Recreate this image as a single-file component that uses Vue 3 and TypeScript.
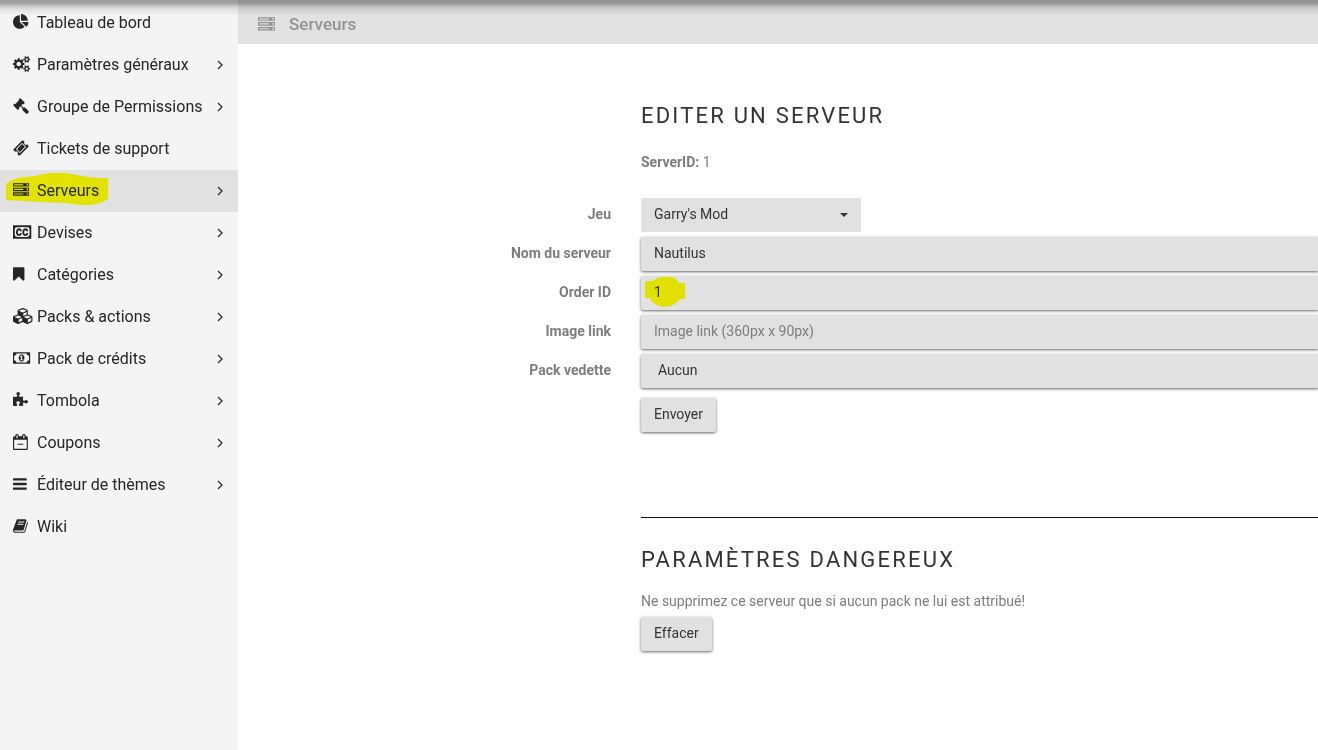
<script setup lang="ts">
import { ref } from 'vue'

interface NavItem {
  label: string
  icon: string
  expandable: boolean
  active?: boolean
}

const icons: Record<string, string> = {
  chart:
    'M768 890l546 546q-106 108-247.500 168T768 1664q-209 0-385.500-103T103 1281.500T0 896t103-385.500T382.500 231T768 128v762zM955 896h773q0 157-60 298.500T1500 1441zM1664 768H896V0q209 0 385.500 103T1561 382.500T1664 768z',
  gears:
    'M896 896q0-106-75-181t-181-75-181 75-75 181 75 181 181 75 181-75 75-181zm768 512q0-52-38-90t-90-38-90 38-38 90q0 53 37.500 90.500t90.500 37.500 90.500-37.500 37.500-90.500zm0-1024q0-52-38-90t-90-38-90 38-38 90q0 53 37.500 90.500t90.500 37.500 90.500-37.500 37.500-90.500zm-384 421v185q0 10-7 19.500t-16 10.500l-155 24q-11 35-32 76 34 48 90 115 7 11 7 20 0 12-7 19-23 30-82.500 89.500t-78.500 59.500q-11 0-21-7l-115-90q-37 19-77 31-11 108-23 155-7 24-30 24h-186q-11 0-20-7.500t-10-17.500l-23-153q-34-10-75-31l-118 89q-7 7-20 7-11 0-21-8-144-133-144-160 0-9 7-19 10-14 41-53t47-61q-23-44-35-82l-152-24q-10-1-17-9.500t-7-19.500v-185q0-10 7-19.500t16-10.500l155-24q11-35 32-76-34-48-90-115-7-11-7-20 0-12 7-20 22-30 82-89t79-59q11 0 21 7l115 90q34-18 77-32 11-108 23-154 7-24 30-24h186q11 0 20 7.500t10 17.500l23 153q34 10 75 31l118-89q8-7 20-7 11 0 21 8 144 133 144 160 0 8-7 19-12 16-42 54t-45 60q23 48 34 82l152 23q10 2 17 10.500t7 19.500zm640 533v140q0 16-149 31-12 27-30 52 51 113 51 138 0 4-4 7-122 71-124 71-8 0-46-47t-52-68q-20 2-30 2t-30-2q-14 21-52 68t-46 47q-2 0-124-71-4-3-4-7 0-25 51-138-18-25-30-52-149-15-149-31v-140q0-16 149-31 13-29 30-52-51-113-51-138 0-4 4-7 4-2 35-20t59-34 30-16q8 0 46 46.500t52 67.500q20-2 30-2t30 2q51-71 92-112l6-2q4 0 124 70 4 3 4 7 0 25-51 138 17 23 30 52 149 15 149 31zm0-1024v140q0 16-149 31-12 27-30 52 51 113 51 138 0 4-4 7-122 71-124 71-8 0-46-47t-52-68q-20 2-30 2t-30-2q-14 21-52 68t-46 47q-2 0-124-71-4-3-4-7 0-25 51-138-18-25-30-52-149-15-149-31v-140q0-16 149-31 13-29 30-52-51-113-51-138 0-4 4-7 4-2 35-20t59-34 30-16q8 0 46 46.500t52 67.500q20-2 30-2t30 2q51-71 92-112l6-2q4 0 124 70 4 3 4 7 0 25-51 138 17 23 30 52 149 15 149 31z',
  gavel:
    'M1771 1536q0 53-37 90l-107 108q-39 37-91 37-53 0-90-37l-363-364q-38-36-38-90 0-53 43-96l-256-256-126 126q-14 14-34 14t-34-14q2 2 12.500 12t12.500 13 10 11.500 10 13.500 6 13.500 5.500 16.500 1.500 18q0 38-28 68-3 3-16.500 18t-19 20.500-18.500 16.500-22 15.500-22 9-26 4.500q-40 0-68-28l-408-408q-28-28-28-68 0-13 4.500-26t9-22 15.500-22 16.500-18.500 20.500-19 18-16.500q30-28 68-28 10 0 18 1.500t16.500 5.500 13.500 6 13.500 10 11.500 10 13 12.500 12 12.500q-14-14-14-34t14-34l348-348q14-14 34-14t34 14q-2-2-12.500-12t-12.500-13-10-11.500-10-13.500-6-13.500-5.500-16.500-1.500-18q0-38 28-68 3-3 16.500-18t19-20.500 18.500-16.500 22-15.500 22-9 26-4.500q40 0 68 28l408 408q28 28 28 68 0 13-4.500 26t-9 22-15.500 22-16.500 18.500-20.500 19-18 16.500q-30 28-68 28-10 0-18-1.500t-16.500-5.500-13.500-6-13.500-10-11.500-10-13-12.500-12-12.500q14 14 14 34t-14 34l-126 126 256 256q43-43 96-43 52 0 91 37l363 363q37 39 37 91z',
  ticket:
    'M1024 452l316 316-572 572-316-316zm-211 979l618-618q19-19 19-45t-19-45l-362-362q-18-18-45-18t-45 18l-618 618q-19 19-19 45t19 45l362 362q18 18 45 18t45-18zm889-637l-907 908q-37 37-90.500 37t-90.500-37l-126-126q56-56 56-136t-56-136-136-56-136 56l-125-126q-37-37-37-90.500t37-90.500l907-906q37-37 90.500-37t90.500 37l125 125q-56 56-56 136t56 136 136 56 136-56l126 125q37 37 37 90.500t-37 90.500z',
  server:
    'M128 1408h1024v-128h-1024v128zm0-512h1024v-128h-1024v128zm1568 448q0-40-28-68t-68-28-68 28-28 68 28 68 68 28 68-28 28-68zm-1568-960h1024v-128h-1024v128zm1568 448q0-40-28-68t-68-28-68 28-28 68 28 68 68 28 68-28 28-68zm0-512q0-40-28-68t-68-28-68 28-28 68 28 68 68 28 68-28 28-68zm96 832v384h-1792v-384h1792zm0-512v384h-1792v-384h1792zm0-512v384h-1792v-384h1792z',
  captions:
    'M785 1008h207q-14 158-98.500 248.500t-214.500 90.500q-162 0-254.500-116t-92.500-316q0-194 93-311.500t233-117.500q148 0 232 87t97 247h-203q-5-64-35.500-99t-81.500-35q-57 0-88.500 60.500t-31.500 177.500q0 48 5 84t18 69.500 40 51.500 66 18q95 0 109-139zm712 0h206q-14 158-98 248.500t-214 90.500q-162 0-254.500-116t-92.500-316q0-194 93-311.500t233-117.500q148 0 232 87t97 247h-204q-4-64-35-99t-81-35q-57 0-88.500 60.500t-31.500 177.500q0 48 5 84t18 69.500 39.500 51.500 65.500 18q49 0 76.500-38t33.500-101zm359-115q0-207-15.500-307t-60.500-161q-6-8-13.500-14t-21.500-15-16-11q-86-63-697-63-625 0-710 63-5 4-17.500 11.500t-21 14-14.500 14.500q-45 60-60 159.500t-15 308.500q0 208 15 307.500t60 160.500q6 8 15 15t20.500 14 17.500 12q44 33 239.500 49t470.500 16q610 0 697-65 5-4 17-11t20.500-14 13.500-16q46-60 61-159t15-309zm192-765v1536h-2048v-1536h2048z',
  bookmark:
    'M1164 128q23 0 44 9 33 13 52.500 41t19.500 62v1289q0 34-19.500 62t-52.500 41q-19 8-44 8-48 0-83-32l-441-424-441 424q-36 33-83 33-23 0-44-9-33-13-52.500-41t-19.500-62v-1289q0-34 19.500-62t52.500-41q21-9 44-9h1048z',
  cubes:
    'M640 1632l384-192v-314l-384 164v342zm-64-454l404-173-404-173-404 173zm1088 454l384-192v-314l-384 164v342zm-64-454l404-173-404-173-404 173zm-448-293l384-165v-266l-384 164v267zm-64-379l441-189-441-189-441 189zm1088 518v416q0 36-19 67t-52 47l-448 224q-25 14-57 14t-57-14l-448-224q-4-2-7-4-2 2-7 4l-448 224q-25 14-57 14t-57-14l-448-224q-33-16-52-47t-19-67v-416q0-38 21.500-70t56.500-48l434-186v-400q0-38 21.500-70t56.500-48l448-192q23-10 50-10t50 10l448 192q35 16 56.500 48t21.500 70v400l434 186q36 16 57 48t21 70z',
  money:
    'M768 1152h384v-96h-128v-448h-114l-148 137 77 80q42-37 55-57h2v288h-128v96zm512-256q0 70-21 142t-59.500 134-101.500 101-138 39-138-39-101.500-101-59.500-134-21-142 21-142 59.500-134 101.500-101 138-39 138 39 101.500 101 59.500 134 21 142zm512 256v-512q-106 0-181-75t-75-181h-1152q0 106-75 181t-181 75v512q106 0 181 75t75 181h1152q0-106 75-181t181-75zm128-832v1152q0 26-19 45t-45 19h-1792q-26 0-45-19t-19-45v-1152q0-26 19-45t45-19h1792q26 0 45 19t19 45z',
  puzzle:
    'M1664 1098q0 81-44.500 135t-123.500 54q-41 0-77.500-17.500t-59-38-56.500-38-71-17.500q-110 0-110 124 0 39 16 115t15 115v5q-22 0-33 1-34 3-97.500 11.500t-115.500 13.500-98 5q-61 0-103-26.500t-42-83.500q0-37 17.500-71t38-56.500 38-59 17.500-77.500q0-79-54-123.500t-135-44.500q-84 0-143 45.500t-59 127.500q0 43 15 83t33.500 64.500 33.500 53 15 50.500q0 45-46 89-37 35-117 35-95 0-245-24-9-2-27.500-4t-27.500-4l-13-2q-1 0-3-1-2 0-2-1v-1024q2 1 17.500 3.500t34 5 21.500 3.500q150 24 245 24 80 0 117-35 46-44 46-89 0-22-15-50.500t-33.500-53-33.500-64.500-15-83q0-82 59-127.500t144-45.500q80 0 134 44.500t54 123.500q0 41-17.500 77.500t-38 59-38 56.500-17.500 71q0 57 42 83.500t103 26.500q64 0 180-15t163-17v2q-1 2-3.500 17.500t-5 34-3.500 21.500q-24 150-24 245 0 80 35 117 44 46 89 46 22 0 50.500-15t53-33.500 64.500-33.500 83-15q82 0 127.500 59t45.500 143z',
  calendar:
    'M128 1664h1408v-1024h-1408v1024zm384-1216v-288q0-14-9-23t-23-9h-64q-14 0-23 9t-9 23v288q0 14 9 23t23 9h64q14 0 23-9t9-23zm768 0v-288q0-14-9-23t-23-9h-64q-14 0-23 9t-9 23v288q0 14 9 23t23 9h64q14 0 23-9t9-23zm384-64v1280q0 52-38 90t-90 38h-1408q-52 0-90-38t-38-90v-1280q0-52 38-90t90-38h128v-96q0-66 47-113t113-47h64q66 0 113 47t47 113v96h384v-96q0-66 47-113t113-47h64q66 0 113 47t47 113v96h128q52 0 90 38t38 90zM544 1088h576q32 0 32 32v64q0 32-32 32h-576q-32 0-32-32v-64q0-32 32-32z',
  bars:
    'M1536 1344v128q0 26-19 45t-45 19h-1408q-26 0-45-19t-19-45v-128q0-26 19-45t45-19h1408q26 0 45 19t19 45zm0-512v128q0 26-19 45t-45 19h-1408q-26 0-45-19t-19-45v-128q0-26 19-45t45-19h1408q26 0 45 19t19 45zm0-512v128q0 26-19 45t-45 19h-1408q-26 0-45-19t-19-45v-128q0-26 19-45t45-19h1408q26 0 45 19t19 45z',
  book:
    'M1639 478q40 57 18 129l-275 906q-19 64-76.500 107.500t-122.500 43.500h-923q-77 0-148.500-53.500t-99.500-131.500q-24-67-2-127 0-4 3-27t4-37q1-8-3-21.500t-3-19.500q2-11 8-21t16.500-23.500 16.500-23.500q23-38 45-91.500t30-91.500q3-10 .5-30t-.5-28q3-11 17-28t17-23q21-36 42-92t25-90q1-9-2.500-32t.5-28q4-13 22-30.500t22-22.500q19-26 42.500-84.500t27.500-96.500q1-8-3-25.500t-2-26.500q2-8 9-18t18-23 17-21q8-12 16.500-30.500t15-35 16-36 19.500-32 26.500-23.500 36-11.500 47.500 5.500l-1 3q38-9 51-9h761q74 0 114 56t18 130l-274 906q-36 119-71.500 153.500t-128.500 34.500h-869q-27 0-38 15-11 16-1 43 24 70 144 70h923q29 0 56-15.500t35-41.500l300-987q7-22 5-57 38 15 59 43zm-1064 2q-4 13 2 22.500t20 9.500h608q13 0 25.500-9.500t16.500-22.500l21-64q4-13-2-22.500t-20-9.500h-608q-13 0-25.500 9.500t-16.500 22.500zm-83 256q-4 13 2 22.500t20 9.500h608q13 0 25.500-9.500t16.500-22.500l21-64q4-13-2-22.500t-20-9.500h-608q-13 0-25.500 9.500t-16.500 22.500z',
}

const navItems: NavItem[] = [
  { label: 'Tableau de bord', icon: 'chart', expandable: false },
  { label: 'Paramètres généraux', icon: 'gears', expandable: true },
  { label: 'Groupe de Permissions', icon: 'gavel', expandable: true },
  { label: 'Tickets de support', icon: 'ticket', expandable: false },
  { label: 'Serveurs', icon: 'server', expandable: true, active: true },
  { label: 'Devises', icon: 'captions', expandable: true },
  { label: 'Catégories', icon: 'bookmark', expandable: true },
  { label: 'Packs & actions', icon: 'cubes', expandable: true },
  { label: 'Pack de crédits', icon: 'money', expandable: true },
  { label: 'Tombola', icon: 'puzzle', expandable: true },
  { label: 'Coupons', icon: 'calendar', expandable: true },
  { label: 'Éditeur de thèmes', icon: 'bars', expandable: true },
  { label: 'Wiki', icon: 'book', expandable: false },
]

const game = ref('Garry\'s Mod')
const serverName = ref('Nautilus')
const orderId = ref('1')
const imageLink = ref('')
const featuredPack = ref('Aucun')
</script>

<template>
  <div class="page">
    <div class="top-shadow"></div>
    <nav class="sidebar">
      <ul class="nav-list">
        <li v-for="item in navItems" :key="item.label">
          <a href="#" class="nav-link" :class="{ active: item.active }">
            <svg v-if="item.active" class="marker marker-nav" viewBox="0 0 102 33" aria-hidden="true">
              <path d="M0 11V27L35 29 60 30 74 32H86L97 29 102 26V5H92L82 4 60 0H44L28 3 12 5 4 8Z" />
            </svg>
            <svg class="nav-icon" viewBox="0 0 2240 1792" aria-hidden="true">
              <path :d="icons[item.icon]" />
            </svg>
            <span class="nav-label">{{ item.label }}</span>
            <svg v-if="item.expandable" class="chevron" viewBox="0 0 6 10" aria-hidden="true">
              <path d="M1 1L5 5L1 9" />
            </svg>
          </a>
        </li>
      </ul>
    </nav>

    <div class="content">
      <header class="page-header">
        <svg class="header-icon" viewBox="0 0 1792 1792" aria-hidden="true">
          <path :d="icons.server" />
        </svg>
        <h1 class="header-title">Serveurs</h1>
      </header>

      <main class="main">
        <h2 class="section-title">Editer un serveur</h2>
        <p class="server-id"><strong>ServerID:</strong> 1</p>

        <form class="form" @submit.prevent>
          <div class="row">
            <label class="label" for="game">Jeu</label>
            <div class="select-wrap">
              <select id="game" v-model="game" class="control flat">
                <option>Garry's Mod</option>
              </select>
              <svg class="caret" viewBox="0 0 8 4" aria-hidden="true"><path d="M0 0H8L4 4Z" /></svg>
            </div>
          </div>
          <div class="row">
            <label class="label" for="server-name">Nom du serveur</label>
            <input id="server-name" v-model="serverName" class="control" type="text" />
          </div>
          <div class="row">
            <label class="label" for="order-id">Order ID</label>
            <div class="order-wrap">
              <input id="order-id" v-model="orderId" class="control" type="text" />
              <svg class="marker marker-order" viewBox="0 0 40 30" aria-hidden="true">
                <path d="M0 4H8L12 1 16 0H26L31 2 34 6H40V22H35L31 26 26 29 18 30 12 28 7 25 5 21H0Z" />
              </svg>
            </div>
          </div>
          <div class="row">
            <label class="label" for="image-link">Image link</label>
            <input
              id="image-link"
              v-model="imageLink"
              class="control"
              type="text"
              placeholder="Image link (360px x 90px)"
            />
          </div>
          <div class="row">
            <label class="label" for="featured-pack">Pack vedette</label>
            <select id="featured-pack" v-model="featuredPack" class="control pack">
              <option>Aucun</option>
            </select>
          </div>
          <button class="button submit" type="submit">Envoyer</button>
        </form>

        <hr class="divider" />

        <h2 class="section-title">Paramètres dangereux</h2>
        <p class="warning">Ne supprimez ce serveur que si aucun pack ne lui est attribué!</p>
        <button class="button" type="button">Effacer</button>
      </main>
    </div>
  </div>
</template>

<style>
body {
  margin: 0;
  background: #fff;
}
</style>

<style scoped>
* {
  box-sizing: border-box;
}

.page {
  --label-column: 403px;
  position: relative;
  display: flex;
  min-height: 100vh;
  overflow: hidden;
  font-family: Roboto, "Liberation Sans", sans-serif;
  font-size: 14px;
  line-height: 20px;
  color: #7d7d7d;
}

.top-shadow {
  position: absolute;
  top: 0;
  left: 0;
  right: 0;
  z-index: 2;
  height: 16px;
  pointer-events: none;
  background: linear-gradient(
    rgba(0, 0, 0, 0.36) 0,
    rgba(0, 0, 0, 0.34) 3px,
    rgba(0, 0, 0, 0.18) 6px,
    rgba(0, 0, 0, 0.07) 10px,
    rgba(0, 0, 0, 0) 16px
  );
}

.sidebar {
  flex: 0 0 238px;
  padding-top: 2px;
  background: #f4f4f4;
}

.nav-list {
  margin: 0;
  padding: 0;
  list-style: none;
}

.nav-link {
  position: relative;
  z-index: 0;
  display: flex;
  align-items: center;
  height: 42px;
  padding: 0 15px 2px 13px;
  font-size: 16px;
  color: #262626;
  text-decoration: none;
}

.nav-link.active {
  background: #e1e1e1;
}

.nav-icon {
  flex: none;
  width: 20px;
  height: 16px;
  margin-right: 4px;
  overflow: visible;
  fill: currentColor;
}

.nav-label {
  flex: 1;
  padding-top: 2px;
  white-space: nowrap;
}

.chevron {
  width: 6px;
  height: 10px;
  margin-top: 2px;
  fill: none;
  stroke: currentColor;
  stroke-width: 1.2;
}

.marker {
  position: absolute;
  fill: #e2e200;
  pointer-events: none;
}

.marker-nav {
  top: 3px;
  left: 6px;
  z-index: -1;
  width: 102px;
  height: 33px;
}

.marker-order {
  top: 1px;
  left: 4px;
  width: 40px;
  height: 30px;
  fill: #ff0;
  mix-blend-mode: multiply;
}

.content {
  flex: 1;
  min-width: 0;
}

.page-header {
  display: flex;
  align-items: center;
  gap: 14px;
  height: 44px;
  padding: 4px 20px 0;
  background: #e1e1e1;
  color: #929292;
}

.header-icon {
  width: 17px;
  height: 17px;
  fill: currentColor;
}

.header-title {
  margin: 0;
  font-size: 17px;
  font-weight: 500;
}

.main {
  padding: 57px 0 40px var(--label-column);
}

.section-title {
  margin: 0;
  font-size: 22px;
  font-weight: 400;
  line-height: 30px;
  letter-spacing: 0.1em;
  text-transform: uppercase;
  color: #333;
}

.server-id {
  margin: 21px 0 26px;
}

.form {
  display: flex;
  flex-direction: column;
  align-items: stretch;
  gap: 5px;
  margin-left: calc(-1 * var(--label-column));
}

.row {
  display: grid;
  grid-template-columns: var(--label-column) minmax(0, 1fr);
}

.label {
  padding: 6px 30px 0 0;
  font-weight: 700;
  text-align: right;
}

.select-wrap {
  position: relative;
  width: 220px;
}

.order-wrap {
  position: relative;
}

.control,
.button {
  display: block;
  height: 34px;
  margin: 0;
  padding: 0 13px 2px;
  border: 0;
  border-radius: 2px;
  outline: 0;
  background: #e1e1e1;
  box-shadow: 0 1px 3px rgba(0, 0, 0, 0.6);
  font: inherit;
  color: #333;
  appearance: none;
}

.control {
  width: 100%;
  border-radius: 2px 0 0 2px;
}

.control::placeholder {
  color: #7d7d7d;
  opacity: 1;
}

.control.flat {
  border-radius: 0;
  box-shadow: none;
}

.control.pack {
  padding-left: 17px;
}

.caret {
  position: absolute;
  top: 15px;
  right: 13px;
  width: 8px;
  height: 4px;
  fill: #333;
  pointer-events: none;
}

.button {
  cursor: pointer;
}

.submit {
  align-self: flex-start;
  margin: 5px 0 0 var(--label-column);
}

.divider {
  height: 1px;
  margin: 85px 0 27px;
  border: 0;
  background: #111;
}

.warning {
  margin: 16px 0 6px;
}
</style>
